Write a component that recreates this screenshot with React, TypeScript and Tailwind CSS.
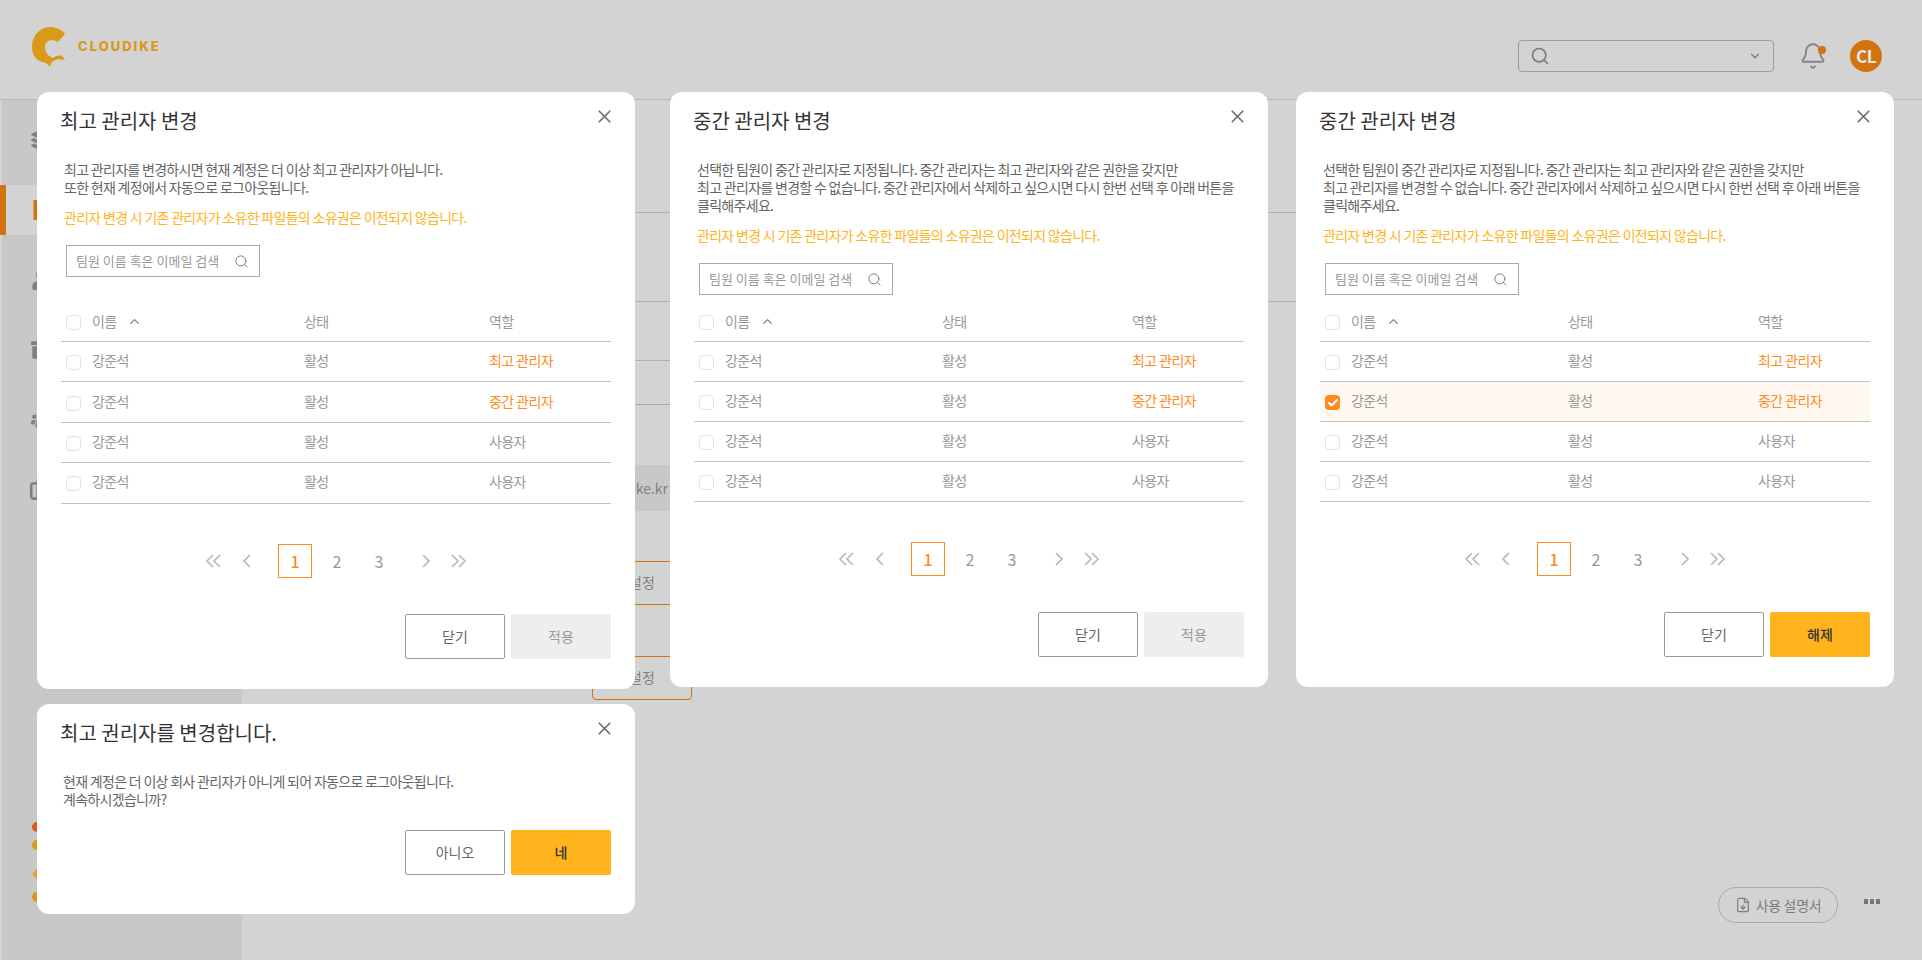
import { Bell, Briefcase, Check, ChevronDown, ChevronUp, FileDown, Search, X } from 'lucide-react'
import { FaArchive, FaFileAlt, FaLayerGroup, FaUser, FaUsers } from 'react-icons/fa'
import type { ReactNode } from 'react'

const rows = [
  { name: '강준석', status: '활성', role: '최고 관리자', admin: true },
  { name: '강준석', status: '활성', role: '중간 관리자', admin: true },
  { name: '강준석', status: '활성', role: '사용자', admin: false },
  { name: '강준석', status: '활성', role: '사용자', admin: false },
]

function Logo() {
  return (
    <div className="flex items-center gap-[13px]">
      <svg width="33" height="40" viewBox="0 0 33 40" className="shrink-0">
        <path
          fill="#d89a18"
          d="M33 7 C29 2 24 0 18 0 C8 0 0 9 0 20 C0 28 4 33 10 35 L14 36 L18 40 L19 36 C22 33 26 31 33 33 L31 30 C27 27 24 29 21 31 L19 30 C15 28 13 24 13 20 C13 16 16 13 20 13 C22 13 24 14 26 15 Z"
        />
      </svg>
      <span className="font-['Inter',sans-serif] text-[13px] font-extrabold tracking-[2px] text-[#d89a18]">CLOUDIKE</span>
    </div>
  )
}

function Sidebar() {
  const item = 'flex h-[50px] items-center pl-[29px] text-[#808080]'
  return (
    <aside className="flex h-[860px] w-[242px] shrink-0 flex-col border-l-2 border-[#d3d3d3] bg-[#c8c8c8] pt-[15px]">
      <div className="flex flex-col gap-[20px]">
        <div className={item}><FaLayerGroup size={22} /></div>
        <div className="-ml-[2px] flex h-[50px] items-center border-l-[6px] border-[#d2730f] bg-[#d3d3d3] pl-[25px] text-[#d2730f]">
          <FaFileAlt size={20} />
        </div>
        <div className={item}><FaUser size={20} /></div>
        <div className={item}><FaArchive size={20} /></div>
        <div className={item}><FaUsers size={22} /></div>
        <div className="flex h-[50px] items-center pl-[27px] text-[#808080]"><Briefcase size={26} strokeWidth={2.4} /></div>
      </div>
      <div className="mt-[307px] flex flex-col pl-[30px]">
        <span className="size-[10px] rounded-full bg-[#e05a1a]" />
        <span className="mt-[8px] size-[10px] rounded-full bg-[#d89a18]" />
        <span className="mt-[19px] ml-[2px] size-[10px] rotate-45 rounded-[2px] bg-[#e0a52c]" />
        <span className="mt-[13px] size-[10px] rounded-full bg-[#d89a18]" />
      </div>
    </aside>
  )
}

function OutlineAction() {
  return (
    <button className="flex h-[44px] w-[100px] items-center justify-center rounded-[4px] border border-[#d2730f] pb-[2px] text-[14px] text-[#808080]">
      설정
    </button>
  )
}

function Backdrop() {
  return (
    <div className="flex min-h-[960px] flex-col bg-[#d3d3d3]">
      <header className="flex h-[100px] items-start justify-between border-b border-[#b8b8b8] pl-[32px] pr-[40px] pt-[27px]">
        <Logo />
        <div className="mt-[13px] flex items-center">
          <div className="flex h-[32px] w-[256px] items-center justify-between rounded-[4px] border border-[#9c9c9c] pl-[11px] pr-[11px] text-[#7d7d7d]">
            <Search size={20} strokeWidth={2} />
            <ChevronDown size={14} strokeWidth={2.2} />
          </div>
          <div className="relative ml-[25px] text-[#858585]">
            <Bell size={28} strokeWidth={1.7} />
            <span className="absolute right-[1px] top-[4px] size-[8px] rounded-full bg-[#d2730f]" />
          </div>
          <div className="ml-[23px] flex size-[32px] items-center justify-center rounded-full bg-[#d2730f] text-[17px] font-bold tracking-[-0.5px] text-[#e8e8e8]">CL</div>
        </div>
      </header>
      <div className="flex flex-1">
        <Sidebar />
        <main className="flex min-w-0 flex-1 flex-col pl-[30px] pr-[42px]">
          <div className="h-[113px] border-b border-[#b0b0b0]" />
          <div className="h-[89px] border-b border-[#b0b0b0]" />
          <div className="w-[960px]">
            <div className="h-[59px] border-b border-[#b0b0b0]" />
            <div className="h-[44px] border-b border-[#a8a8a8]" />
            <div className="mt-[60px] flex h-[46px] items-center justify-end whitespace-nowrap bg-[#c8c8c8] pr-[564px] text-[14px] text-[#808080]">
              cloudike.kr
            </div>
            <div className="ml-[320px] mt-[50px]"><OutlineAction /></div>
            <div className="ml-[320px] mt-[51px]"><OutlineAction /></div>
          </div>
          <div className="mt-[187px] flex items-center justify-end">
            <div className="flex h-[36px] w-[120px] items-center justify-center gap-[5px] rounded-full border border-[#a8a8a8] text-[14px] tracking-[-0.3px] text-[#7d7d7d]">
              <FileDown size={16} strokeWidth={1.8} />
              사용 설명서
            </div>
            <div className="ml-[26px] mb-[7px] flex gap-[2px]">
              <span className="h-[5px] w-[4px] bg-[#777]" />
              <span className="h-[5px] w-[4px] bg-[#777]" />
              <span className="h-[5px] w-[4px] bg-[#777]" />
            </div>
          </div>
        </main>
      </div>
    </div>
  )
}

function CheckBox({ checked, className }: { checked?: boolean; className?: string }) {
  if (checked) {
    return (
      <span className={`flex size-[15px] shrink-0 items-center justify-center rounded-[4px] bg-[#ff8a1f] text-white ${className}`}>
        <Check size={12} strokeWidth={4} />
      </span>
    )
  }
  return <span className={`size-[15px] shrink-0 rounded-[4px] border border-[#e2e2e2] bg-white ${className}`} />
}

function MemberTable({ cols, rowHeight, selected }: { cols: string; rowHeight: string; selected?: number }) {
  return (
    <div className="text-[14px] tracking-[-0.6px] text-[#999]">
      <div className={`grid h-[41px] items-center border-b border-[#c4c4c4] ${cols}`}>
        <div className="flex items-center pl-[5px]">
          <CheckBox className="mt-[2px]" />
          <span className="ml-[11px]">이름</span>
          <ChevronUp size={15} strokeWidth={2.2} className="ml-[10px] text-[#808080]" />
        </div>
        <span>상태</span>
        <span>역할</span>
      </div>
      {rows.map((row, i) => (
        <div key={i} className={`grid items-center border-b border-[#c4c4c4] pb-[2px] ${cols} ${rowHeight} ${selected === i ? 'bg-[#fff9f2]' : ''}`}>
          <div className="flex items-center pl-[5px]">
            <CheckBox checked={selected === i} className="mt-[4px]" />
            <span className="ml-[11px]">{row.name}</span>
          </div>
          <span>{row.status}</span>
          <span className={row.admin ? 'text-[#ff8a1f]' : ''}>{row.role}</span>
        </div>
      ))}
    </div>
  )
}

function DoubleArrow({ flip }: { flip?: boolean }) {
  return (
    <svg width="17" height="14" viewBox="0 0 17 14" fill="none" stroke="#b8b8b8" strokeWidth="1.6" className={flip ? 'rotate-180' : ''}>
      <path d="M8 1 L2 7 L8 13" />
      <path d="M15 1 L9 7 L15 13" />
    </svg>
  )
}

function SingleArrow({ flip }: { flip?: boolean }) {
  return (
    <svg width="8" height="14" viewBox="0 0 8 14" fill="none" stroke="#b8b8b8" strokeWidth="1.6" className={flip ? 'rotate-180' : ''}>
      <path d="M7 1 L1 7 L7 13" />
    </svg>
  )
}

function Pager() {
  const arrow = 'flex w-[25px] justify-center'
  const page = 'flex h-[34px] w-[34px] items-center justify-center text-[16px] text-[#999]'
  return (
    <div className="mt-[40px] flex items-center justify-center gap-[8px]">
      <span className={arrow}><DoubleArrow /></span>
      <span className={`${arrow} mr-[11px]`}><SingleArrow /></span>
      <span className="flex h-[34px] w-[34px] items-center justify-center border border-[#ff8a1f] text-[16px] font-medium text-[#ff8a1f]">1</span>
      <span className={page}>2</span>
      <span className={page}>3</span>
      <span className={`${arrow} ml-[9px]`}><SingleArrow flip /></span>
      <span className={arrow}><DoubleArrow flip /></span>
    </div>
  )
}

function Buttons({ left, right, active }: { left: string; right: string; active?: boolean }) {
  return (
    <div className="flex justify-end gap-[6px] px-[24px]">
      <button className="h-[45px] w-[100px] rounded-[2px] border border-[#999] bg-white text-[14px] text-[#666]">{left}</button>
      <button className={`h-[45px] w-[100px] rounded-[2px] text-[14px] ${active ? 'bg-[#ffb31c] font-medium text-[#333]' : 'bg-[#eee] text-[#999]'}`}>
        {right}
      </button>
    </div>
  )
}

function Modal({ title, position, children }: { title: string; position: string; children: ReactNode }) {
  return (
    <section className={`absolute w-[598px] rounded-[12px] bg-white ${position}`}>
      <h2 className="pl-[23px] pt-[16px] text-[20px] leading-[26px] text-[#333]">{title}</h2>
      <X size={21} strokeWidth={2} className="absolute right-[20px] top-[14px] text-[#707070]" />
      {children}
    </section>
  )
}

function SearchField({ top }: { top: string }) {
  return (
    <div className={`ml-[29px] flex h-[32px] w-[194px] items-center border border-[#aaa] pl-[9px] pr-[10px] ${top}`}>
      <input
        readOnly
        placeholder="팀원 이름 혹은 이메일 검색"
        className="min-w-0 flex-1 bg-transparent text-[13px] outline-none placeholder:text-[#999]"
      />
      <Search size={15} strokeWidth={1.6} className="shrink-0 text-[#808080]" />
    </div>
  )
}

const warning = '관리자 변경 시 기존 관리자가 소유한 파일들의 소유권은 이전되지 않습니다.'

function MiddleAdminModal({ position, selected, action }: { position: string; selected?: number; action: boolean }) {
  return (
    <Modal title="중간 관리자 변경" position={position}>
      <div className="mt-[26px] pl-[27px] text-[14px] leading-[18px] tracking-[-0.7px] text-[#666]">
        선택한 팀원이 중간 관리자로 지정됩니다. 중간 관리자는 최고 관리자와 같은 권한을 갖지만
        <br />
        최고 관리자를 변경할 수 없습니다. 중간 관리자에서 삭제하고 싶으시면 다시 한번 선택 후 아래 버튼을
        <br />
        클릭해주세요.
      </div>
      <p className="mt-[12px] pl-[27px] text-[14px] leading-[18px] tracking-[-0.7px] text-[#ffb31c]">{warning}</p>
      <SearchField top="mt-[19px]" />
      <div className="mt-[6px] px-[24px]">
        <MemberTable cols="grid-cols-[248px_190px_1fr]" rowHeight="h-[40px]" selected={selected} />
      </div>
      <Pager />
      <div className="mb-[30px] mt-[36px]">
        <Buttons left="닫기" right={action ? '해제' : '적용'} active={action} />
      </div>
    </Modal>
  )
}

export default function App() {
  return (
    <div className="relative h-[960px] overflow-hidden font-['Noto_Sans_CJK_KR','Noto_Sans',sans-serif]">
      <Backdrop />

      <Modal title="최고 관리자 변경" position="left-[37px] top-[92px]">
        <div className="mt-[26px] pl-[27px] text-[14px] leading-[18px] tracking-[-0.7px] text-[#666]">
          최고 관리자를 변경하시면 현재 계정은 더 이상 최고 관리자가 아닙니다.
          <br />
          또한 현재 계정에서 자동으로 로그아웃됩니다.
        </div>
        <p className="mt-[12px] pl-[27px] text-[14px] leading-[18px] tracking-[-0.7px] text-[#ffb31c]">{warning}</p>
        <SearchField top="mt-[19px]" />
        <div className="mt-[24px] px-[24px]">
          <MemberTable cols="grid-cols-[243px_185px_1fr]" rowHeight="h-[40.4px]" />
        </div>
        <Pager />
        <div className="mb-[30px] mt-[36px]">
          <Buttons left="닫기" right="적용" />
        </div>
      </Modal>

      <MiddleAdminModal position="left-[670px] top-[92px]" action={false} />
      <MiddleAdminModal position="left-[1296px] top-[92px]" selected={1} action />

      <Modal title="최고 권리자를 변경합니다." position="left-[37px] top-[704px]">
        <div className="mt-[26px] pl-[26px] text-[14px] leading-[18px] tracking-[-0.7px] text-[#666]">
          현재 계정은 더 이상 회사 관리자가 아니게 되어 자동으로 로그아웃됩니다.
          <br />
          계속하시겠습니까?
        </div>
        <div className="mb-[39px] mt-[22px]">
          <Buttons left="아니오" right="네" active />
        </div>
      </Modal>
    </div>
  )
}
